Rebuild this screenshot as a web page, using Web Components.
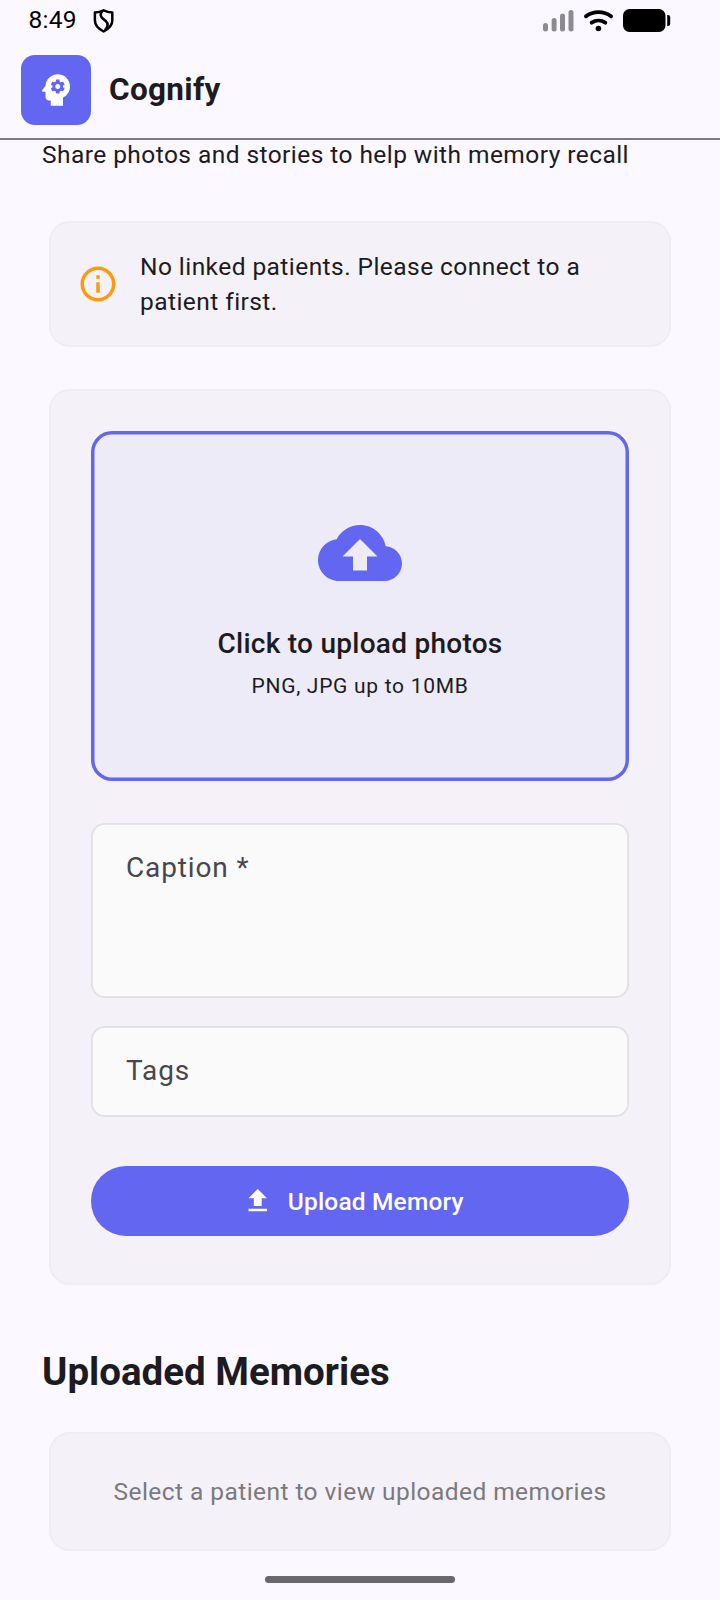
<!DOCTYPE html>
<html lang="en">
<head>
<meta charset="utf-8">
<title>Cognify</title>
<style>
html,body{margin:0;padding:0}
body{width:720px;height:1600px;overflow:hidden;background:#fbf8ff;color:#1d1b20;font-family:Roboto,"Liberation Sans",sans-serif}
</style>
</head>
<body>
<memory-page></memory-page>
<script>
const define = (name, html) => {
  const t = document.createElement('template');
  t.innerHTML = html;
  customElements.define(name, class extends HTMLElement {
    constructor() {
      super();
      this.attachShadow({mode: 'open'}).appendChild(t.content.cloneNode(true));
    }
  });
};

define('status-bar', `
<style>
:host{display:flex;box-sizing:border-box;height:42px;padding:0 49px 0 28.5px;color:#000;align-items:flex-start}
.time{font-size:24.5px;line-height:28px;letter-spacing:.3px;margin-top:6px;width:47px;white-space:nowrap}
svg{display:block;flex:none}
.shield{margin:8px 0 0 16.5px}
.right{margin-left:auto;display:flex;margin-top:9px}
</style>
<span class="time">8:49</span>
<svg class="shield" width="24" height="26" viewBox="0 0 24 26" fill="none" stroke="#000" stroke-linejoin="round" stroke-linecap="round">
<path stroke-width="2.5" d="M11.6 2.300C8.700 3.700 5.900 4.300 2.900 4.500V12.500C2.900 17.600 6.400 20.800 11.600 23.500C16.800 20.800 20.300 17.600 20.300 12.500V4.500C17.300 4.300 14.500 3.700 11.600 2.300Z"/>
<path stroke-width="2.500" d="M10 3.600C8.200 6 8.300 8.400 10.400 10.200L14 13.300C16.300 15.500 16 18.300 13.600 21.300"/>
</svg>
<div class="right">
<svg width="128" height="24" viewBox="0 0 128 24">
<g fill="#8d8b91"><rect x="0" y="14" width="5" height="8.500" rx="2.500"/><rect x="8.600" y="9" width="5" height="13.500" rx="2.500"/><rect x="17" y="4.500" width="5" height="18" rx="2.500"/><rect x="25.500" y="1" width="5" height="21.500" rx="2.500"/></g>
<g fill="none" stroke="#000" stroke-width="3.900" stroke-linecap="round"><path d="M43 7.200C50.200 1.700 60.800 1.700 68 7.200"/><path d="M48.700 13.700C52.700 10.900 58.300 10.900 62.300 13.700"/></g>
<circle cx="55.400" cy="19.500" r="2.800"/>
<rect x="80" y="0" width="42.500" height="23" rx="6.500"/><path d="M124.200 6H125Q127.200 6 127.200 8.200V14.800Q127.200 17 125 17H124.200Z"/>
</svg>
</div>`);

define('app-bar', `
<style>
:host{display:flex;box-sizing:border-box;height:98px;padding:13px 21px 0;border-bottom:2px solid #7b7881}
.logo{width:70px;height:70px;border-radius:14px;background:#6366f1;display:grid;place-items:center}
svg{display:block}
.name{margin-left:18px;font-size:31.5px;line-height:42px;font-weight:700;letter-spacing:.3px;margin-top:14px}
</style>
<div class="logo"><svg width="42" height="42" viewBox="0 0 24 24" fill="#fff"><path d="M13 8.570c-.79 0-1.430.64-1.430 1.430s.64 1.430 1.430 1.430 1.430-.64 1.430-1.430-.64-1.430-1.430-1.430z"/><path d="M13 3C9.250 3 6.200 5.940 6.020 9.640L4.100 12.200c-.25.33-.01.8.4.8H6v3c0 1.100.9 2 2 2h1v3h7v-4.680c2.360-1.120 4-3.530 4-6.320 0-3.870-3.130-7-7-7zm3 7c0 .13-.01.26-.02.39l.83.66c.08.060.1.160.05.25l-.8 1.390c-.05.09-.16.12-.24.09l-.99-.4c-.21.16-.43.29-.67.39L14 13.830c-.01.1-.1.170-.2.170h-1.600c-.1 0-.18-.07-.2-.170l-.15-1.060c-.25-.1-.47-.23-.68-.39l-.99.4c-.09.03-.2 0-.25-.09l-.8-1.390c-.05-.08-.03-.19.05-.25l.84-.66c-.01-.13-.02-.26-.02-.39s.02-.27.04-.39l-.85-.66c-.08-.06-.1-.16-.05-.26l.8-1.380c.05-.09.15-.12.24-.09l1 .4c.2-.15.43-.29.67-.39l.15-1.060c.02-.1.1-.17.2-.17h1.600c.1 0 .18.070.2.170l.15 1.060c.24.1.46.230.67.390l1-.4c.09-.03.2 0 .24.090l.8 1.380c.05.090.03.200-.05.260l-.85.66c.03.120.04.250.04.390z"/></svg></div>
<span class="name">Cognify</span>`);

define('m-card', `
<style>
:host{display:block;box-sizing:border-box;margin:0 49px;background:#f4f2f8;border-radius:21px;box-shadow:inset 0 0 0 1.750px #efedf2}
</style><slot></slot>`);

define('info-notice', `
<style>
:host{display:flex;align-items:center;padding:28px;height:70px;font-size:24.5px;line-height:35px;letter-spacing:.4375px}
svg{display:block;flex:none;margin-right:21px}
</style>
<svg width="42" height="42" viewBox="0 0 24 24" fill="#fd990c"><path d="M11 7h2v2h-2zm0 4h2v6h-2zm1-9C6.480 2 2 6.480 2 12s4.480 10 10 10 10-4.480 10-10S17.520 2 12 2zm0 18c-4.410 0-8-3.590-8-8s3.590-8 8-8 8 3.590 8 8-3.590 8-8 8z"/></svg>
<div><slot></slot></div>`);

define('upload-zone', `
<style>
:host{display:flex;box-sizing:border-box;flex-direction:column;align-items:center;height:350px;padding-top:80px;box-shadow:inset 0 0 0 3.500px #6467e8;border-radius:21px;background:#edebf7}
svg{display:block;margin-bottom:28px}
.t{font-size:28px;font-weight:500;line-height:42px;letter-spacing:.2625px}
.s{font-size:21px;line-height:28px;letter-spacing:.7px;margin-top:7px}
</style>
<svg width="84" height="84" viewBox="0 0 24 24" fill="#6366f1"><path d="M19.350 10.040C18.670 6.590 15.640 4 12 4 9.110 4 6.600 5.640 5.350 8.040 2.340 8.360 0 10.910 0 14c0 3.310 2.690 6 6 6h13c2.760 0 5-2.240 5-5 0-2.640-2.050-4.780-4.650-4.960zM14 13v4h-4v-4H7l5-5 5 5h-3z"/></svg>
<span class="t">Click to upload photos</span>
<span class="s">PNG, JPG up to 10MB</span>`);

define('text-field', `
<style>
:host{display:block;box-sizing:border-box;height:var(--h,91px);border-radius:14px;background:#fafafa;box-shadow:inset 0 0 0 1.750px #e0e0e3;padding:24px 35px;font-size:28px;line-height:42px;letter-spacing:.875px;color:#49464e}
</style><slot></slot>`);

define('filled-button', `
<style>
:host{display:flex;box-sizing:border-box;height:70px;padding-right:14px;border-radius:35px;background:#6366f1;color:#fff;align-items:center;justify-content:center;font-size:24.5px;font-weight:500;letter-spacing:.175px}
svg{display:block;margin-right:14px}
</style>
<svg width="31.5" height="31.5" viewBox="0 0 24 24" fill="#fff"><path d="M5 20h14v-2H5v2zM5 10h4v6h6v-6h4l-7-7-7 7z"/></svg>
<span><slot></slot></span>`);

define('memory-page', `
<style>
:host{display:block;height:1600px}
.lead{padding:0 42px;margin-top:-3px;font-size:24.5px;line-height:35px;letter-spacing:.4375px}
.notice{margin-top:49px}
.form{margin-top:42px;padding:42px;height:896px}
.caption{margin-top:42px;--h:175px}
.tags{margin-top:28px}
filled-button{margin-top:49px}
h2{margin:62px 42px 0;font-size:38.5px;line-height:49px;font-weight:700}
.empty{margin-top:36px;height:119px;padding-top:42px;text-align:center;font-size:24.5px;line-height:35px;letter-spacing:.4375px;color:#7b797e}
.home{width:190px;height:7px;border-radius:4px;background:#6b686d;margin:25px auto 0}
</style>
<status-bar></status-bar>
<app-bar></app-bar>
<div class="lead">Share photos and stories to help with memory recall</div>
<m-card class="notice"><info-notice>No linked patients. Please connect to a patient first.</info-notice></m-card>
<m-card class="form">
<upload-zone></upload-zone>
<text-field class="caption">Caption *</text-field>
<text-field class="tags">Tags</text-field>
<filled-button>Upload Memory</filled-button>
</m-card>
<h2>Uploaded Memories</h2>
<m-card class="empty">Select a patient to view uploaded memories</m-card>
<div class="home"></div>`);
</script>
</body>
</html>
